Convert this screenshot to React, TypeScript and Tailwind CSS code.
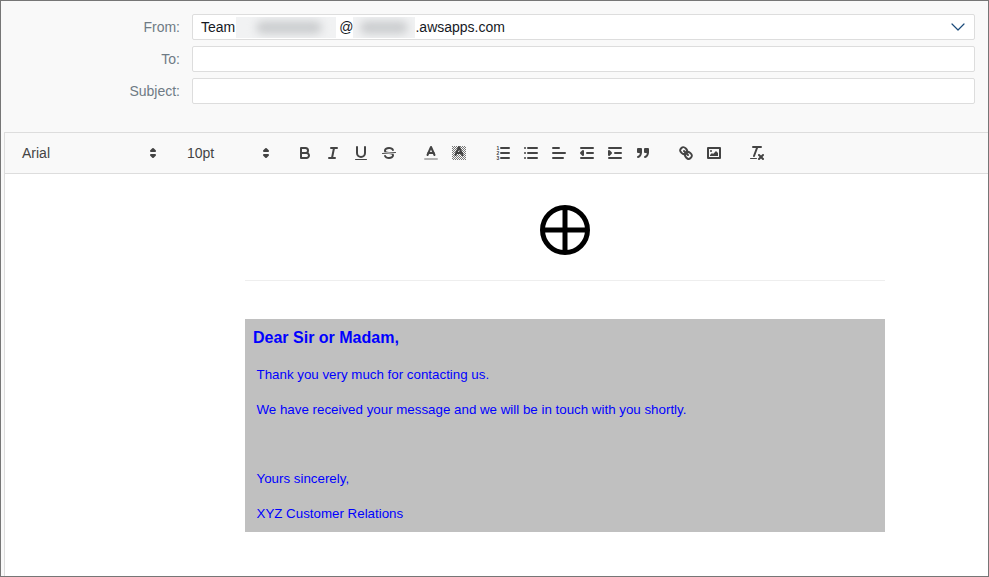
import { ChevronDown } from "lucide-react";
import type { ReactNode } from "react";

const Blur = ({ width, inner, offset }: { width: string; inner: string; offset: string }) => (
  <span className={`relative inline-block h-[21px] overflow-hidden bg-[#f1f2f3] ${width}`}>
    <span className={`absolute top-[4px] h-[13px] rounded-full bg-[#cbcdcf] blur-[4px] ${inner} ${offset}`} />
  </span>
);

const Field = ({ label, children }: { label: string; children?: ReactNode }) => (
  <div className="flex h-[26px] items-center">
    <label className="w-[179px] pr-0 text-right text-[14px] text-[#6f7b85]">{label}</label>
    <div className="ml-[12px] flex h-[26px] w-[783px] items-center rounded-[2px] border border-[#dddddd] bg-white pl-[8px] text-[14px] text-[#16191f]">
      {children}
    </div>
  </div>
);

const Icon = ({ children }: { children: ReactNode }) => (
  <button className="flex h-[24px] w-[28px] items-center justify-center">
    <svg
      viewBox="0 0 18 18"
      className="h-[18px] w-[18px] fill-none stroke-[#444444] [stroke-linecap:round] [stroke-linejoin:round] [stroke-width:2]"
    >
      {children}
    </svg>
  </button>
);

const Picker = ({ label, width, pad }: { label: string; width: string; pad: string }) => (
  <div className={`flex h-[24px] items-center justify-between text-[14px] text-[#444444] ${pad} ${width}`}>
    <span>{label}</span>
    <svg viewBox="0 0 18 18" className="mr-[2px] h-[18px] w-[18px] fill-[#444444] stroke-[#444444] [stroke-linejoin:round] [stroke-width:2]">
      <polygon points="7 11 9 13 11 11 7 11" />
      <polygon points="7 7 9 5 11 7 7 7" />
    </svg>
  </div>
);

const Toolbar = () => (
  <div className="flex h-[41px] items-center border-b border-[#dddddd] bg-[#f9f9f9] pl-[8px]">
    <Picker label="Arial" width="w-[151px]" pad="pl-[9px]" />
    <div className="w-[15px]" />
    <Picker label="10pt" width="w-[98px]" pad="pl-[8px]" />
    <div className="flex ml-[14px]">
      <Icon>
        <path d="M5,4H9.5A2.5,2.5,0,0,1,12,6.5v0A2.5,2.5,0,0,1,9.5,9H5A0,0,0,0,1,5,9V4A0,0,0,0,1,5,4Z" />
        <path d="M5,9h5.5A2.5,2.5,0,0,1,13,11.5v0A2.5,2.5,0,0,1,10.5,14H5a0,0,0,0,1,0,0V9A0,0,0,0,1,5,9Z" />
      </Icon>
      <Icon>
        <line x1="7" x2="13" y1="4" y2="4" />
        <line x1="5" x2="11" y1="14" y2="14" />
        <line x1="8" x2="10" y1="14" y2="4" />
      </Icon>
      <Icon>
        <path d="M5,3V9a4.012,4.012,0,0,0,4,4H9a4.012,4.012,0,0,0,4-4V3" />
        <rect x="3" y="15" width="12" height="1" rx=".5" ry=".5" className="fill-[#444444] stroke-none" />
      </Icon>
      <Icon>
        <line x1="15.5" x2="2.5" y1="8.5" y2="9.5" className="[stroke-width:1]" />
        <path
          className="fill-[#444444] stroke-none"
          d="M9.007,8C6.542,7.791,6,7.519,6,6.5,6,5.792,7.283,5,9,5c1.571,0,2.765.679,2.969,1.309a1,1,0,0,0,1.9-.617C13.356,4.106,11.354,3,9,3,6.2,3,4,4.538,4,6.5a3.2,3.2,0,0,0,.5,1.843Z"
        />
        <path
          className="fill-[#444444] stroke-none"
          d="M8.984,10C11.457,10.208,12,10.479,12,11.5c0,.708-1.283,1.5-3,1.5-1.571,0-2.765-.679-2.969-1.309a1,1,0,1,0-1.9.617C4.644,13.894,6.646,15,9,15c2.8,0,5-1.538,5-3.5a3.2,3.2,0,0,0-.5-1.843Z"
        />
      </Icon>
    </div>
    <div className="flex ml-[14px]">
      <Icon>
        <line x1="3" x2="15" y1="15" y2="15" className="stroke-[#b3b3b3]" />
        <polyline points="5.5 11 9 3 12.5 11" />
        <line x1="11.63" x2="6.38" y1="9" y2="9" />
      </Icon>
      <Icon>
        <defs>
          <pattern id="hatch" width="2" height="2" patternUnits="userSpaceOnUse">
            <rect width="1" height="1" fill="#777777" stroke="none" />
            <rect x="1" y="1" width="1" height="1" fill="#777777" stroke="none" />
          </pattern>
        </defs>
        <rect x="2" y="2" width="14" height="14" fill="url(#hatch)" stroke="none" />
        <polyline points="5.5 11 9 3 12.5 11" />
        <line x1="11.63" x2="6.38" y1="9" y2="9" />
      </Icon>
    </div>
    <div className="flex ml-[16px]">
      <Icon>
        <line x1="7" x2="15" y1="4" y2="4" />
        <line x1="7" x2="15" y1="9" y2="9" />
        <line x1="7" x2="15" y1="14" y2="14" />
        <g className="fill-[#444444] stroke-none font-['Liberation_Sans',sans-serif] text-[5px] font-bold">
          <text x="2.4" y="5.6">1</text>
          <text x="2.4" y="10.6">2</text>
          <text x="2.4" y="15.6">3</text>
        </g>
      </Icon>
      <Icon>
        <line x1="6" x2="15" y1="4" y2="4" />
        <line x1="6" x2="15" y1="9" y2="9" />
        <line x1="6" x2="15" y1="14" y2="14" />
        <line x1="3" x2="3" y1="4" y2="4" />
        <line x1="3" x2="3" y1="9" y2="9" />
        <line x1="3" x2="3" y1="14" y2="14" />
      </Icon>
      <Icon>
        <line x1="3" x2="15" y1="9" y2="9" />
        <line x1="3" x2="13" y1="14" y2="14" />
        <line x1="3" x2="9" y1="4" y2="4" />
      </Icon>
      <Icon>
        <line x1="3" x2="15" y1="14" y2="14" />
        <line x1="3" x2="15" y1="4" y2="4" />
        <line x1="9" x2="15" y1="9" y2="9" />
        <polyline points="5 7 5 11 3 9 5 7" className="fill-[#444444]" />
      </Icon>
      <Icon>
        <line x1="3" x2="15" y1="14" y2="14" />
        <line x1="3" x2="15" y1="4" y2="4" />
        <line x1="9" x2="15" y1="9" y2="9" />
        <polyline points="3 7 3 11 5 9 3 7" className="fill-[#444444]" />
      </Icon>
      <Icon>
        <rect x="4" y="5" width="3" height="3" className="fill-[#444444]" />
        <rect x="11" y="5" width="3" height="3" className="fill-[#444444]" />
        <path d="M7,8c0,4.031-3,5-3,5" />
        <path d="M14,8c0,4.031-3,5-3,5" />
      </Icon>
    </div>
    <div className="flex ml-[15px]">
      <Icon>
        <line x1="7" x2="11" y1="7" y2="11" />
        <path d="M8.9,4.577a3.476,3.476,0,0,1,.36,4.679A3.476,3.476,0,0,1,4.577,8.9C3.185,7.5,2.035,6.4,4.217,4.217S7.5,3.185,8.9,4.577Z" />
        <path d="M13.423,9.1a3.476,3.476,0,0,0-4.679-.36,3.476,3.476,0,0,0,.36,4.679c1.392,1.392,2.5,2.542,4.679.36S14.815,10.5,13.423,9.1Z" />
      </Icon>
      <Icon>
        <rect x="3" y="4" width="12" height="10" />
        <circle cx="6" cy="7" r="1" className="fill-[#444444] stroke-none" />
        <polyline points="5 12 5 11 7 9 8 10 11 7 13 9 13 12 5 12" className="fill-[#444444] stroke-none" />
      </Icon>
    </div>
    <div className="flex ml-[15px]">
      <Icon>
        <line x1="5" x2="13" y1="3" y2="3" />
        <line x1="6" x2="9.35" y1="12" y2="3" />
        <line x1="11" x2="15" y1="11" y2="15" />
        <line x1="15" x2="11" y1="11" y2="15" />
        <rect x="2" y="14" width="7" height="1" rx=".5" ry=".5" className="fill-[#444444] stroke-none" />
      </Icon>
    </div>
  </div>
);

const Email = () => (
  <div className="ml-[240px] w-[640px] font-['Liberation_Sans',Arial,sans-serif] text-[#0000ff]">
    <div className="flex h-[107px] items-start justify-center border-b border-[#eeeeee] pt-[31px]">
      <svg viewBox="0 0 50 50" className="h-[50px] w-[50px] fill-none stroke-black [stroke-width:5]">
        <circle cx="25" cy="25" r="22.5" />
        <line x1="25" x2="25" y1="2" y2="48" />
        <line x1="2" x2="48" y1="25" y2="25" />
      </svg>
    </div>
    <div className="mt-[38px] h-[213px] bg-[#c0c0c0] pt-[9px]">
      <h1 className="pl-[8px] text-[16px] leading-[19px] font-bold">Dear Sir or Madam,</h1>
      <div className="mt-[20px] pl-[11.5px] text-[13.33px] leading-[16px]">
        <p>Thank you very much for contacting us.</p>
        <p className="mt-[19px]">We have received your message and we will be in touch with you shortly.</p>
        <p className="mt-[53px]">Yours sincerely,</p>
        <p className="mt-[19px]">XYZ Customer Relations</p>
      </div>
    </div>
  </div>
);

const App = () => (
  <div className="flex h-[577px] w-[989px] flex-col border border-[#767676] bg-[#f9f9f9] font-['Liberation_Sans',Arial,sans-serif]">
    <div className="flex h-[131px] flex-col gap-[6px] pt-[13px]">
      <Field label="From:">
        <span className="flex min-w-0 flex-1 items-center">
          Team
          <Blur width="ml-[1px] w-[100px]" inner="w-[66px]" offset="left-[20px]" />
          <span className="ml-[3px]">@</span>
          <Blur width="w-[62px]" inner="w-[48px]" offset="left-[7px]" />
          .awsapps.com
        </span>
        <ChevronDown className="mr-[4px] h-[24px] w-[24px] text-[#1a4a7a]" strokeWidth={1.2} />
      </Field>
      <Field label="To:" />
      <Field label="Subject:" />
    </div>
    <div className="ml-[3px] flex flex-1 flex-col border-t border-l border-[#dddddd] bg-white">
      <Toolbar />
      <Email />
    </div>
  </div>
);

export default App;
